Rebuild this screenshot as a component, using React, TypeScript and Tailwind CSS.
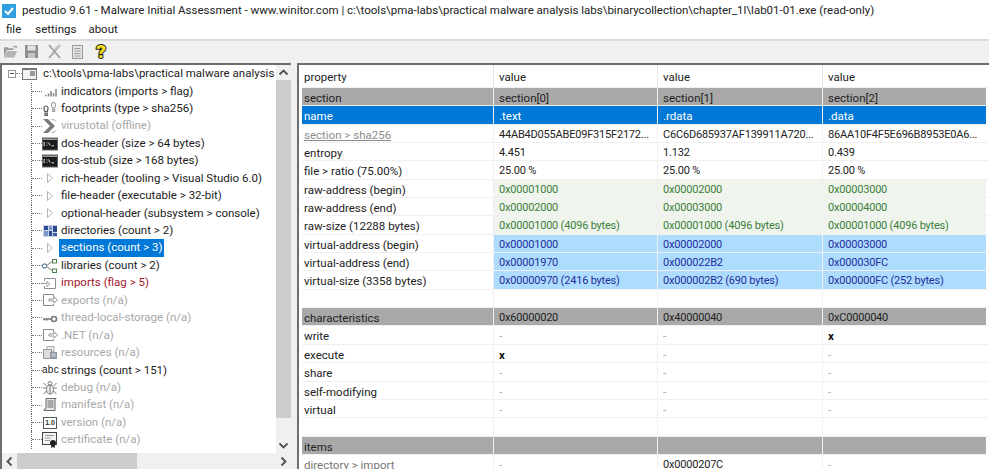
import type { ReactNode } from "react";

const font = "font-['Roboto',sans-serif]";

function Svg({ children }: { children: ReactNode }) {
  return (
    <svg width="16" height="16" viewBox="0 0 16 16" fill="none">
      {children}
    </svg>
  );
}

const BarsIcon = () => (
  <Svg>
    <path d="M3 12.500h1.500M6.500 10.500v3M9 8v5.500M11.500 10v3.500M14 6v7.500" stroke="#8a8a8a" strokeWidth="1.600" />
  </Svg>
);
const FootIcon = () => (
  <Svg>
    <path d="M2 7a2 2 0 0 1 4 0c0 1.500-.5 2.500-.7 3.500H2.800C2.500 9.500 2 8.500 2 7zM3 12h2.300v2.300H3z" stroke="#555" strokeWidth="1.200" />
    <path d="M9.500 3.500a2 2 0 0 1 4 0c0 1.500-.5 2.500-.7 3.500h-2.500c-.3-1-.8-2-.8-3.500zM10.500 8.500h2.300v2h-2.300z" stroke="#888" />
  </Svg>
);
const VtIcon = () => (
  <Svg>
    <path d="M1 1h5l7 7-7 7H1l7-7z" fill="#7a7a7a" />
    <path d="M8 1h4l3 3zM8 15h4l3-3z" fill="#bbb" />
  </Svg>
);
const ConsoleIcon = () => (
  <Svg>
    <rect x="0.500" y="2" width="15" height="12" fill="#1a1a1a" stroke="#666" />
    <rect x="1" y="2.500" width="14" height="1.500" fill="#9a9a9a" />
    <path d="M3 6.500H2v3h1M5 6.500v.8M5 8.800v.8M6.500 6.500l1.500 3M9.500 9.800H12" stroke="#eee" strokeWidth="0.900" />
  </Svg>
);
const TriIcon = () => (
  <Svg>
    <path d="M5.500 3.500l5 4.500-5 4.500z" stroke="#b5b5b5" fill="#fff" />
  </Svg>
);
const DirIcon = () => (
  <Svg>
    <rect x="1" y="2" width="14" height="12" fill="#c8d4ea" />
    <path d="M2 3h4v4H2zM11 3h4v6h-4zM7 8h3v5H7z" fill="#2c4a92" />
    <path d="M7 3h3v4H7zM2 8h4v5H2z" fill="#7d96c8" />
    <path d="M11 10h4v3h-4z" fill="#3f5ca8" />
  </Svg>
);
const LibIcon = () => (
  <Svg>
    <path d="M4 8l6-4.500M4 8l6 4.500" stroke="#777" />
    <rect x="0.500" y="6" width="4" height="4" rx="1.500" stroke="#2f5f8a" fill="#fff" />
    <rect x="10.500" y="1.500" width="4" height="3.500" stroke="#4d7f4d" fill="#fff" />
    <rect x="10.500" y="11" width="4" height="3.500" stroke="#4d7f4d" fill="#fff" />
  </Svg>
);
const ImportIcon = () => (
  <Svg>
    <path d="M2.500 3.500h11v10h-11v-2.500M2.500 6V3.500" stroke="#8e8e8e" />
    <path d="M0 8.500h5V6.500l3 2.500-3 2.500v-2" stroke="#8e8e8e" fill="#fff" strokeWidth="0.900" />
  </Svg>
);
const ExportIcon = () => (
  <Svg>
    <path d="M11.500 5V2.500h-10v11h10V12" stroke="#8a8a8a" />
    <path d="M7 7h5V5l3.500 3-3.500 3V9H7z" stroke="#8a8a8a" fill="#fff" strokeWidth="0.900" />
  </Svg>
);
const KeyIcon = () => (
  <Svg>
    <circle cx="12" cy="9" r="2.500" stroke="#777" strokeWidth="1.600" />
    <path d="M1 9h8M2.500 9v1.500M5 9v1.500" stroke="#777" strokeWidth="1.400" />
  </Svg>
);
const ResIcon = () => (
  <Svg>
    <rect x="5" y="1.500" width="7" height="5" stroke="#aaa" fill="#eee" />
    <rect x="1.500" y="4.500" width="8" height="9" stroke="#9a9a9a" fill="#ddd" />
    <rect x="8" y="7" width="7" height="7" fill="#8f9aa3" />
    <path d="M9.500 9h4M9.500 11h4" stroke="#dfe3e6" />
  </Svg>
);
const AbcIcon = () => (
  <span className="block w-[16px] font-['Liberation_Sans',sans-serif] text-[10px] leading-[16px] tracking-[0.3px] text-[#222]">abc</span>
);
const BugIcon = () => (
  <Svg>
    <ellipse cx="8" cy="9.500" rx="3.500" ry="4.500" stroke="#777" fill="#eee" />
    <circle cx="8" cy="3.500" r="2" stroke="#777" />
    <path d="M8 5v9M4.500 8H1M4.500 11l-3 3M4.500 6l-3-3M11.500 8H15M11.500 11l3 3M11.500 6l3-3" stroke="#777" />
  </Svg>
);
const ManifestIcon = () => (
  <Svg>
    <path d="M4 1.500h10l-1 1v11H2v-1l2-1z" stroke="#666" fill="#e9e9e9" />
    <path d="M5.500 4h6M5.500 6h6M5.500 8h6M5.500 10h6" stroke="#666" />
  </Svg>
);
const VersionIcon = () => (
  <span className="flex h-[12px] w-[14px] items-center justify-center border border-[#555] font-['Liberation_Sans',sans-serif] text-[7px] leading-none font-bold text-[#333]">1.0</span>
);
const CertIcon = () => (
  <Svg>
    <rect x="0.500" y="0.500" width="14" height="12" stroke="#444" fill="#f5f5f5" />
    <path d="M3 3.500h9M3 6h6M3 8.500h5" stroke="#999" />
    <circle cx="11" cy="11" r="3" fill="#222" />
    <path d="M9.500 13l-.5 3 2-1 2 1-.5-3" fill="#222" />
  </Svg>
);

type TreeItem = { icon: ReactNode; text: string; tone?: "off" | "flag" | "selected" };

const tree: TreeItem[] = [
  { icon: <BarsIcon />, text: "indicators (imports > flag)" },
  { icon: <FootIcon />, text: "footprints (type > sha256)" },
  { icon: <VtIcon />, text: "virustotal (offline)", tone: "off" },
  { icon: <ConsoleIcon />, text: "dos-header (size > 64 bytes)" },
  { icon: <ConsoleIcon />, text: "dos-stub (size > 168 bytes)" },
  { icon: <TriIcon />, text: "rich-header (tooling > Visual Studio 6.0)" },
  { icon: <TriIcon />, text: "file-header (executable > 32-bit)" },
  { icon: <TriIcon />, text: "optional-header (subsystem > console)" },
  { icon: <DirIcon />, text: "directories (count > 2)" },
  { icon: <TriIcon />, text: "sections (count > 3)", tone: "selected" },
  { icon: <LibIcon />, text: "libraries (count > 2)" },
  { icon: <ImportIcon />, text: "imports (flag > 5)", tone: "flag" },
  { icon: <ExportIcon />, text: "exports (n/a)", tone: "off" },
  { icon: <KeyIcon />, text: "thread-local-storage (n/a)", tone: "off" },
  { icon: <ExportIcon />, text: ".NET (n/a)", tone: "off" },
  { icon: <ResIcon />, text: "resources (n/a)", tone: "off" },
  { icon: <AbcIcon />, text: "strings (count > 151)" },
  { icon: <BugIcon />, text: "debug (n/a)", tone: "off" },
  { icon: <ManifestIcon />, text: "manifest (n/a)", tone: "off" },
  { icon: <VersionIcon />, text: "version (n/a)", tone: "off" },
  { icon: <CertIcon />, text: "certificate (n/a)", tone: "off" },
];

function TreeRow({ item }: { item: TreeItem }) {
  const tone =
    item.tone === "off"
      ? "text-[#a8a8a8]"
      : item.tone === "flag"
        ? "text-[#a5142a]"
        : item.tone === "selected"
          ? "bg-[#0078d7] text-white"
          : "text-[#1c1c1c]";
  return (
    <div className="ml-[29px] flex h-[17.45px] items-center border-l border-dotted border-[#666]">
      <div className="w-[10px] shrink-0 border-t border-dotted border-[#777]" />
      <div className="flex w-[16px] shrink-0 items-center justify-center">{item.icon}</div>
      <span className={`ml-[1px] h-[17.45px] whitespace-nowrap px-[2px] leading-[17px] ${tone}`}>{item.text}</span>
    </div>
  );
}

type Row = { label: string; cells: string[]; kind?: string };

const rows: Row[] = [
  { label: "section", cells: ["section[0]", "section[1]", "section[2]"], kind: "head" },
  { label: "name", cells: [".text", ".rdata", ".data"], kind: "selected" },
  { label: "section > sha256", cells: ["44AB4D055ABE09F315F2172...", "C6C6D685937AF139911A720...", "86AA10F4F5E696B8953E0A6..."], kind: "link" },
  { label: "entropy", cells: ["4.451", "1.132", "0.439"] },
  { label: "file > ratio (75.00%)", cells: ["25.00 %", "25.00 %", "25.00 %"] },
  { label: "raw-address (begin)", cells: ["0x00001000", "0x00002000", "0x00003000"], kind: "raw" },
  { label: "raw-address (end)", cells: ["0x00002000", "0x00003000", "0x00004000"], kind: "raw" },
  { label: "raw-size (12288 bytes)", cells: ["0x00001000 (4096 bytes)", "0x00001000 (4096 bytes)", "0x00001000 (4096 bytes)"], kind: "raw" },
  { label: "virtual-address (begin)", cells: ["0x00001000", "0x00002000", "0x00003000"], kind: "virt" },
  { label: "virtual-address (end)", cells: ["0x00001970", "0x000022B2", "0x000030FC"], kind: "virt" },
  { label: "virtual-size (3358 bytes)", cells: ["0x00000970 (2416 bytes)", "0x000002B2 (690 bytes)", "0x000000FC (252 bytes)"], kind: "virt" },
  { label: "", cells: ["", "", ""] },
  { label: "characteristics", cells: ["0x60000020", "0x40000040", "0xC0000040"], kind: "head" },
  { label: "write", cells: ["-", "-", "x"], kind: "flag" },
  { label: "execute", cells: ["x", "-", "-"], kind: "flag" },
  { label: "share", cells: ["-", "-", "-"], kind: "flag" },
  { label: "self-modifying", cells: ["-", "-", "-"], kind: "flag" },
  { label: "virtual", cells: ["-", "-", "-"], kind: "flag" },
  { label: "", cells: ["", "", ""] },
  { label: "items", cells: ["", "", ""], kind: "head" },
  { label: "directory > import", cells: ["-", "0x0000207C", "-"], kind: "flagmuted" },
];

const colWidths = ["w-[191px]", "w-[164px]", "w-[165px]", "w-[164px]"];

// Roboto digits run wider than the original's, so number-heavy values get a tighter setting
const numeric = /\d{2}|\d\./;

function cellClass(kind: string | undefined, value: string) {
  const size = numeric.test(value) ? "text-[11px] tracking-[-0.2px]" : "";
  if (kind === "head") return `bg-[#a9a9a9] text-[#222] ${size}`;
  if (kind === "selected") return "bg-[#0078d7] text-white";
  if (kind === "raw") return `bg-[#eff5ec] text-[#3d7d3d] ${size}`;
  if (kind === "virt") return `bg-[#aedcff] text-[#1f2f9c] ${size}`;
  if ((kind === "flag" || kind === "flagmuted") && value === "-") return "text-[#a8a8a8]";
  if (kind === "flag" && value === "x") return "font-bold text-[#111]";
  return `text-[#222] ${size}`;
}

function labelClass(kind: string | undefined) {
  if (kind === "head") return "bg-[#a9a9a9] text-[#222]";
  if (kind === "selected") return "bg-[#0078d7] text-white";
  if (kind === "link") return "text-[#8c8c8c] underline";
  if (kind === "flagmuted") return "text-[#777]";
  return "text-[#222]";
}

function TableRow({ row }: { row: Row }) {
  return (
    <div className="flex h-[18.35px] border-b border-[#f0f0f0]">
      <div className={`${colWidths[0]} shrink-0 truncate pl-[2px] leading-[20px] ${labelClass(row.kind)}`}>{row.label}</div>
      {row.cells.map((cell, i) => (
        <div
          key={i}
          className={`${colWidths[i + 1]} shrink-0 truncate border-l border-[#f0f0f0] pl-[5px] leading-[20px] ${cellClass(row.kind, cell)}`}
        >
          {cell}
        </div>
      ))}
    </div>
  );
}

function Arrow({ d }: { d: string }) {
  return (
    <svg width="15" height="15" viewBox="0 0 15 15" fill="none">
      <path d={d} stroke="#505050" strokeWidth="1.800" />
    </svg>
  );
}

export default function App() {
  return (
    <div className={`flex h-[469px] w-[989px] flex-col overflow-hidden bg-white text-[11.5px] ${font}`}>
      <div className="flex h-[21px] shrink-0 items-center bg-white">
        <svg className="ml-[2px]" width="14" height="14" viewBox="0 0 14 14">
          <rect width="14" height="14" fill="#2f9fe0" />
          <path d="M3 7l3 3 5-6" stroke="#fff" strokeWidth="2" fill="none" />
        </svg>
        <span className="ml-[6px] whitespace-nowrap text-[#222]">
          pestudio 9.61 - Malware Initial Assessment - www.winitor.com | c:\tools\pma-labs\practical malware analysis labs\binarycollection\chapter_1l\lab01-01.exe (read-only)
        </span>
      </div>
      <div className="flex h-[18px] shrink-0 items-center gap-[13px] pl-[6px] text-[#222]">
        <span>file</span>
        <span className="ml-[1px]">settings</span>
        <span className="-ml-[1px]">about</span>
      </div>
      <div className="flex h-[24px] shrink-0 items-center gap-[6px] border-t-2 border-[#dcdcdc] bg-[#f0f0f0] pb-[1px] pl-[3px]">
        <svg width="15" height="15" viewBox="0 0 16 15">
          <path d="M1 3h4l1 1h5v2H4l-3 7z" fill="#9a9a9a" />
          <path d="M4 7h11l-3 7H1z" fill="#b4b4b4" />
          <path d="M10 3c1-2 3-2 4-1l1-1v3h-3l1-1c-1-.5-2-.5-3 0z" fill="#a8a8a8" />
        </svg>
        <svg width="15" height="15" viewBox="0 0 15 15">
          <rect x="1" y="1" width="13" height="13" fill="#8f8f8f" />
          <rect x="3.500" y="1.500" width="8" height="5" fill="#e4e4e4" />
          <rect x="4" y="9" width="7" height="5" fill="#c4c4c4" />
        </svg>
        <svg className="ml-[2px]" width="15" height="15" viewBox="0 0 15 15">
          <path d="M2 1l11 13M13 1L2 14" stroke="#a0a0a0" strokeWidth="1.800" />
          <path d="M8 5l5-4" stroke="#c4c4c4" strokeWidth="2" />
        </svg>
        <svg className="ml-[2px]" width="15" height="15" viewBox="0 0 15 15">
          <rect x="2.500" y="1.500" width="10" height="13" fill="#e4e4e4" stroke="#9c9c9c" />
          <path d="M4.500 4.500h6M4.500 7h6M4.500 9.500h6M4.500 12h6" stroke="#9c9c9c" />
        </svg>
        <span className="ml-[3px] w-[14px] text-center text-[19px] leading-[15px] font-black text-[#f7e01c] [-webkit-text-stroke:2px_#222] [paint-order:stroke_fill]">?</span>
      </div>
      <div className="flex min-h-0 flex-1 bg-[#f0f0f0]">
        <div className="flex w-[291px] shrink-0 flex-col border-t-2 border-l-2 border-[#6e6e6e] bg-white">
          <div className="flex min-h-0 flex-1">
            <div className="min-w-0 flex-1 overflow-hidden">
              <div className="flex h-[17.5px] items-center">
                <div className="ml-[6px] flex h-[8px] w-[8px] shrink-0 items-center justify-center border border-[#9a9a9a]">
                  <div className="h-px w-[4px] bg-[#555]" />
                </div>
                <div className="w-[6px] shrink-0 border-t border-dotted border-[#888]" />
                <div className="flex h-[12px] w-[15px] shrink-0 justify-end border border-t-[2px] border-[#777] bg-[#f2f2f2] pt-[1px] pr-[1px]">
                  <div className="h-[5px] w-[5px] bg-[#999]" />
                </div>
                <span className="ml-[6px] whitespace-nowrap leading-[17px] text-[#222]">c:\tools\pma-labs\practical malware analysis</span>
              </div>
              {tree.map((item) => (
                <TreeRow key={item.text} item={item} />
              ))}
            </div>
            <div className="flex w-[15px] shrink-0 flex-col bg-[#f0f0f0]">
              <Arrow d="M3.500 9.500l4-4 4 4" />
              <div className="h-[338px] bg-[#cdcdcd]" />
              <div className="flex-1" />
              <Arrow d="M3.500 5.500l4 4 4-4" />
            </div>
          </div>
          <div className="flex h-[16px] shrink-0 items-center bg-[#f0f0f0]">
            <Arrow d="M9.500 3.500l-4 4 4 4" />
            <div className="h-full w-[120px] bg-[#cdcdcd]" />
            <div className="flex-1" />
            <Arrow d="M5.500 3.500l4 4-4 4" />
          </div>
        </div>
        <div className="ml-[6px] min-w-0 flex-1 overflow-hidden border-t-2 border-l-2 border-[#6e6e6e] bg-white pl-[3px]">
          <div className="flex h-[23px] border-b border-[#f0f0f0]">
            <div className={`${colWidths[0]} shrink-0 pl-[2px] leading-[24px] text-[#222]`}>property</div>
            {[1, 2, 3].map((i) => (
              <div key={i} className={`${colWidths[i]} shrink-0 border-l border-[#e5e5e5] pl-[5px] leading-[24px] text-[#222]`}>
                value
              </div>
            ))}
          </div>
          {rows.map((row, i) => (
            <TableRow key={i} row={row} />
          ))}
        </div>
      </div>
    </div>
  );
}
